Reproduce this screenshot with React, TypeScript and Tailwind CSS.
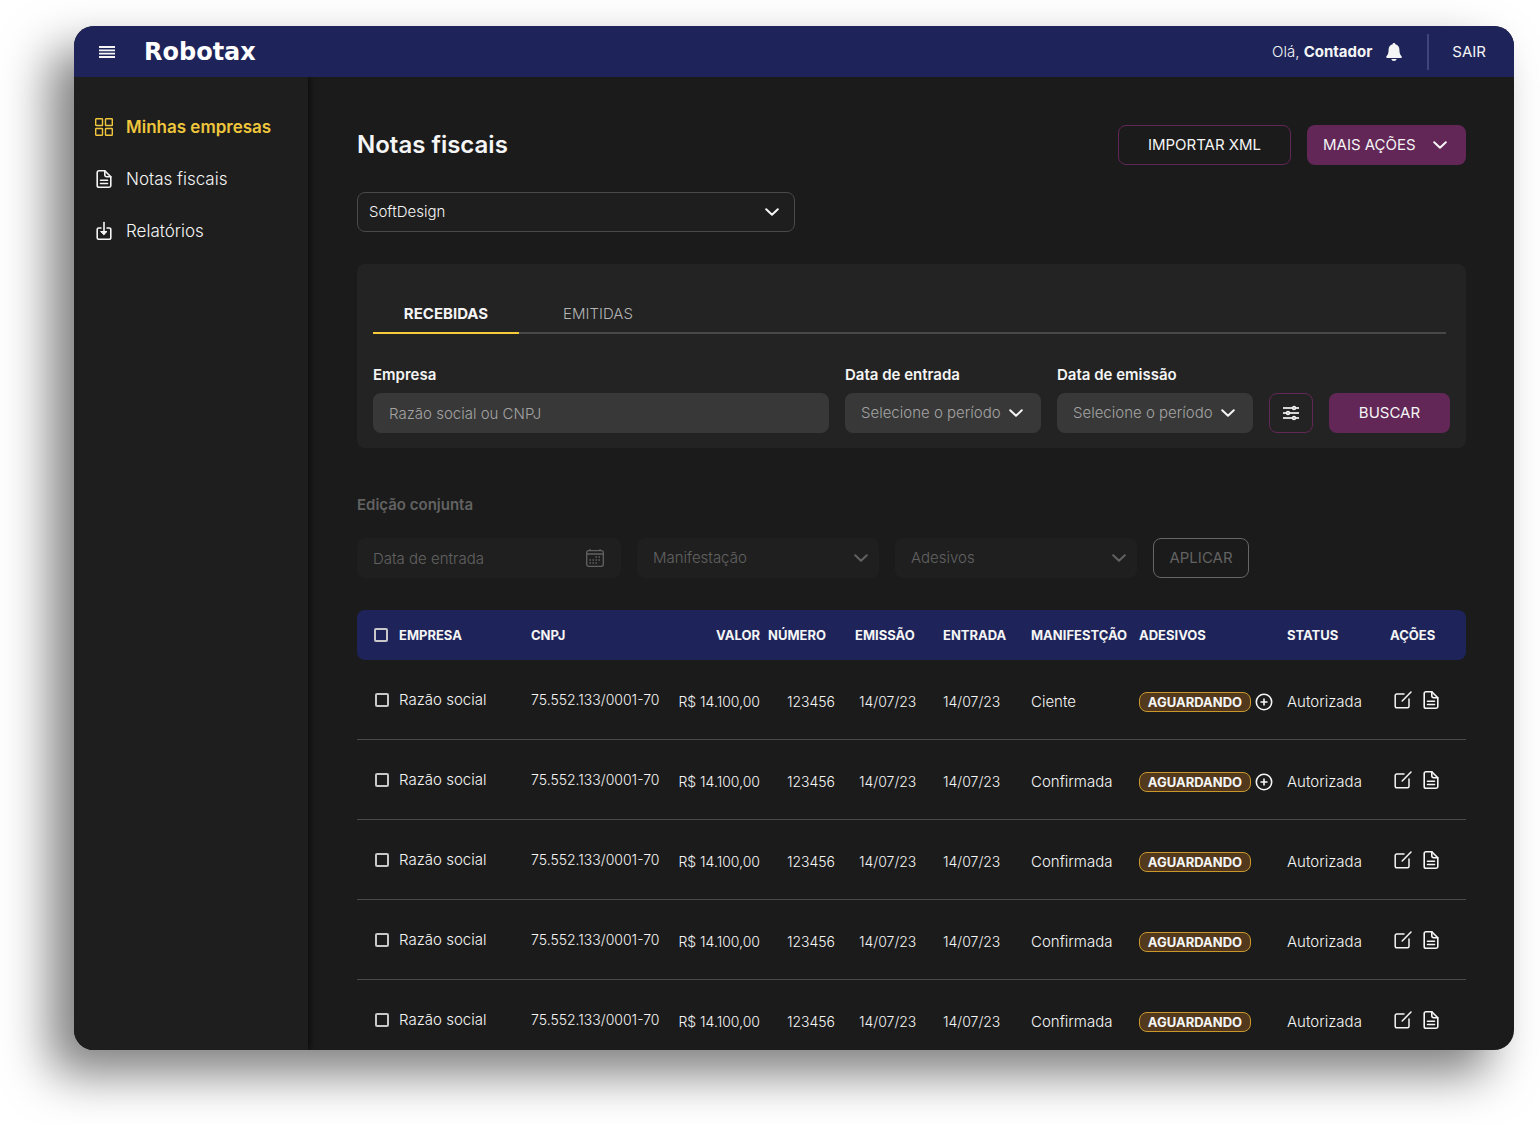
import { useState } from "react";
import type { ReactNode } from "react";

type Invoice = {
  id: number;
  company: string;
  cnpj: string;
  value: string;
  number: string;
  issued: string;
  entered: string;
  manifest: string;
  sticker: string;
  canAddSticker: boolean;
  status: string;
};

const BASE_INVOICE = {
  company: "Razão social",
  cnpj: "75.552.133/0001-70",
  value: "R$ 14.100,00",
  number: "123456",
  issued: "14/07/23",
  entered: "14/07/23",
  sticker: "AGUARDANDO",
  status: "Autorizada",
};

const INVOICES: Invoice[] = [
  { ...BASE_INVOICE, id: 1, manifest: "Ciente", canAddSticker: true },
  { ...BASE_INVOICE, id: 2, manifest: "Confirmada", canAddSticker: true },
  { ...BASE_INVOICE, id: 3, manifest: "Confirmada", canAddSticker: false },
  { ...BASE_INVOICE, id: 4, manifest: "Confirmada", canAddSticker: false },
  { ...BASE_INVOICE, id: 5, manifest: "Confirmada", canAddSticker: false },
];

const TABS = [
  { value: "received", label: "RECEBIDAS" },
  { value: "issued", label: "EMITIDAS" },
] as const;

type Tab = (typeof TABS)[number]["value"];

function MenuIcon() {
  return (
    <svg width="16" height="12" viewBox="0 0 16 12" stroke="currentColor" strokeWidth="1.8" aria-hidden>
      <path d="M0 1h16M0 4.300h16M0 7.700h16M0 11h16" />
    </svg>
  );
}

function BellIcon() {
  return (
    <svg width="16" height="18" viewBox="0 0 16 18" fill="currentColor" aria-hidden>
      <path d="M8 0c.8 0 1.3.5 1.4 1.2C12 1.8 13.400 4 13.400 6.600c0 3.600.7 5.200 2.100 6.600.8.800.4 1.800-.7 1.800H1.200C.1 15-.3 14 .5 13.200c1.400-1.400 2.100-3 2.100-6.600C2.600 4 4 1.800 6.600 1.200 6.700.5 7.200 0 8 0z" />
      <path d="M5.300 16h5.400c-.3 1.200-1.300 2-2.700 2s-2.400-.8-2.700-2z" />
    </svg>
  );
}

function GridIcon() {
  return (
    <svg width="18" height="18" viewBox="0 0 18 18" fill="none" stroke="currentColor" strokeWidth="1.400" aria-hidden>
      <rect x=".7" y=".7" width="6.800" height="6.800" rx=".6" />
      <rect x="10.500" y=".7" width="6.800" height="6.800" rx=".6" />
      <rect x=".7" y="10.500" width="6.800" height="6.800" rx=".6" />
      <rect x="10.500" y="10.500" width="6.800" height="6.800" rx=".6" />
    </svg>
  );
}

function DocIcon() {
  return (
    <svg
      width="18"
      height="20"
      viewBox="0 0 18 20"
      fill="none"
      stroke="currentColor"
      strokeWidth="1.600"
      strokeLinecap="round"
      strokeLinejoin="round"
      aria-hidden
    >
      <path d="M9.800 1.700H4A1.800 1.800 0 0 0 2.200 3.500v13A1.800 1.800 0 0 0 4 18.300h10a1.800 1.800 0 0 0 1.800-1.800V7.700z" />
      <path d="M9.800 1.700v4.200a1.800 1.800 0 0 0 1.800 1.800h4.200M5.500 11.200h7M5.500 14.500h7" />
    </svg>
  );
}

function DownloadIcon() {
  return (
    <svg
      width="18"
      height="20"
      viewBox="0 0 18 20"
      fill="none"
      stroke="currentColor"
      strokeWidth="1.600"
      strokeLinecap="round"
      strokeLinejoin="round"
      aria-hidden
    >
      <path d="M6 7H3.700A1.500 1.500 0 0 0 2.200 8.500v8.300a1.500 1.500 0 0 0 1.500 1.500h10.600a1.500 1.500 0 0 0 1.500-1.500V8.500A1.500 1.500 0 0 0 14.300 7H12" />
      <path d="M9 1.500V13" />
      <path d="M6 10.500h6l-3 3z" fill="currentColor" strokeWidth="1" />
    </svg>
  );
}

function ChevronIcon() {
  return (
    <svg
      width="14"
      height="8"
      viewBox="0 0 14 8"
      fill="none"
      stroke="currentColor"
      strokeWidth="2"
      strokeLinecap="round"
      strokeLinejoin="round"
      aria-hidden
    >
      <path d="M1.200 1.200 7 6.800l5.800-5.600" />
    </svg>
  );
}

function SlidersIcon() {
  return (
    <svg width="16" height="16" viewBox="0 0 16 16" stroke="#d4d4d4" strokeWidth="2" aria-hidden>
      <path d="M0 3h16M0 8h16M0 13h16" />
      <g fill="#8a8a8a" stroke="#f5f5f5" strokeWidth="1.400">
        <circle cx="11" cy="3" r="1.500" />
        <circle cx="5" cy="8" r="1.500" />
        <circle cx="11" cy="13" r="1.500" />
      </g>
    </svg>
  );
}

function CalendarIcon() {
  return (
    <svg width="18" height="18" viewBox="0 0 18 18" fill="none" stroke="currentColor" strokeWidth="1.300" aria-hidden>
      <rect x=".7" y="1.700" width="16.600" height="15.600" rx="2" />
      <path d="M.7 5h16.600M4 0v2M14 0v2" />
      <path d="M9.500 8h6M3.500 11h12M3.500 14h8.500" strokeWidth="1.500" strokeDasharray="1.500 1.500" />
    </svg>
  );
}

function EditIcon() {
  return (
    <svg
      width="18"
      height="18"
      viewBox="0 0 18 18"
      fill="none"
      stroke="currentColor"
      strokeWidth="1.500"
      strokeLinecap="round"
      strokeLinejoin="round"
      aria-hidden
    >
      <path d="M10 3H2.700A1.500 1.500 0 0 0 1.200 4.500v10.800a1.500 1.500 0 0 0 1.500 1.500h10.800a1.500 1.500 0 0 0 1.500-1.500V8" />
      <path d="M8.200 10 17 1" />
    </svg>
  );
}

function PlusIcon() {
  return (
    <svg width="18" height="18" viewBox="0 0 18 18" fill="none" stroke="currentColor" strokeWidth="1.600" aria-hidden>
      <circle cx="9" cy="9" r="7.700" />
      <path d="M9 5.500v7M5.500 9h7" />
    </svg>
  );
}

const NAV_ITEMS: { label: string; icon: ReactNode; active: boolean }[] = [
  { label: "Minhas empresas", icon: <GridIcon />, active: true },
  { label: "Notas fiscais", icon: <DocIcon />, active: false },
  { label: "Relatórios", icon: <DownloadIcon />, active: false },
];

function SelectBox({
  id,
  label,
  option,
  className,
  chevronClassName,
  disabled,
}: {
  id: string;
  label?: string;
  option: string;
  className: string;
  chevronClassName: string;
  disabled?: boolean;
}) {
  return (
    <div className="relative">
      <select
        id={id}
        aria-label={label}
        disabled={disabled}
        className={`h-10 w-full appearance-none rounded-lg pr-8 ${className}`}
      >
        <option>{option}</option>
      </select>
      <span className={`pointer-events-none absolute inset-y-0 flex items-center ${chevronClassName}`}>
        <ChevronIcon />
      </span>
    </div>
  );
}

function Checkbox({ label }: { label: string }) {
  return (
    <input
      type="checkbox"
      aria-label={label}
      className="block size-[14px] appearance-none rounded-xs border-2 border-[#c8c8c8] checked:bg-[#f5cb3b]"
    />
  );
}

function TopBar() {
  return (
    <header className="z-20 flex h-[51px] shrink-0 items-center bg-[#1e245a] pr-7 pl-[25px]">
      <button type="button" aria-label="Menu">
        <MenuIcon />
      </button>
      <a href="#" className="ml-[29px] font-['DejaVu_Sans',sans-serif] text-2xl font-bold text-white">
        Robotax
      </a>
      <div className="ml-auto flex items-center">
        <span className="font-light">
          Olá, <strong className="font-bold">Contador</strong>
        </span>
        <button type="button" aria-label="Notificações" className="ml-[14px]">
          <BellIcon />
        </button>
        <span className="ml-[25px] h-9 w-0.5 bg-[#40467a]" />
        <a href="#" className="ml-[23px]">
          SAIR
        </a>
      </div>
    </header>
  );
}

function Sidebar() {
  return (
    <nav className="z-10 w-[234px] shrink-0 bg-[#1e1e1e] pt-6 pl-5 shadow-[2px_0_6px_rgba(0,0,0,0.6)]">
      {NAV_ITEMS.map((item) => (
        <a
          key={item.label}
          href="#"
          className={`flex h-[52px] items-center gap-3 text-[17px] ${
            item.active ? "font-semibold text-[#efc63c]" : "font-light"
          }`}
        >
          <span className="flex w-5 justify-center">{item.icon}</span>
          {item.label}
        </a>
      ))}
    </nav>
  );
}

function FilterCard() {
  const [tab, setTab] = useState<Tab>("received");

  return (
    <section className="mt-8 rounded-lg bg-[#232323] px-4 pt-8 pb-[15px]">
      <div role="tablist" className="mr-1 flex gap-1.5 border-b-2 border-[#484848]">
        {TABS.map((t) => (
          <button
            key={t.value}
            type="button"
            role="tab"
            aria-selected={tab === t.value}
            onClick={() => setTab(t.value)}
            className={`-mb-0.5 h-[38px] w-[146px] border-b-2 ${
              tab === t.value
                ? "border-[#f5cb3b] font-bold"
                : "border-transparent font-light text-[#b4b4b4]"
            }`}
          >
            {t.label}
          </button>
        ))}
      </div>
      <form className="mt-[31px] flex items-end gap-4" onSubmit={(e) => e.preventDefault()}>
        <div className="flex-1">
          <label htmlFor="company" className="mb-2 block font-semibold">
            Empresa
          </label>
          <input
            id="company"
            type="text"
            placeholder="Razão social ou CNPJ"
            className="block h-10 w-full rounded-lg bg-[#383838] px-4 font-light placeholder:text-[#a3a3a3]"
          />
        </div>
        <div className="w-[196px]">
          <label htmlFor="entry-date" className="mb-2 block font-semibold">
            Data de entrada
          </label>
          <SelectBox
            id="entry-date"
            option="Selecione o período"
            className="bg-[#383838] pl-4 font-light text-[#a3a3a3]"
            chevronClassName="right-[18px]"
          />
        </div>
        <div className="w-[196px]">
          <label htmlFor="issue-date" className="mb-2 block font-semibold">
            Data de emissão
          </label>
          <SelectBox
            id="issue-date"
            option="Selecione o período"
            className="bg-[#383838] pl-4 font-light text-[#a3a3a3]"
            chevronClassName="right-[18px]"
          />
        </div>
        <button
          type="button"
          aria-label="Mais filtros"
          className="flex h-10 w-11 items-center justify-center rounded-lg border border-[#622757]"
        >
          <SlidersIcon />
        </button>
        <button type="submit" className="h-10 w-[121px] rounded-lg bg-[#622757]">
          BUSCAR
        </button>
      </form>
    </section>
  );
}

function BulkEdit() {
  return (
    <section className="mt-[47px] text-[#626262]">
      <h2 className="font-semibold">Edição conjunta</h2>
      <div className="mt-[23px] flex gap-4">
        <div className="relative w-[264px]">
          <input
            type="text"
            disabled
            aria-label="Data de entrada"
            placeholder="Data de entrada"
            className="block h-10 w-full rounded-lg bg-[#1f1f1f] px-4 font-light placeholder:text-[#626262]"
          />
          <span className="pointer-events-none absolute inset-y-0 right-[17px] flex items-center">
            <CalendarIcon />
          </span>
        </div>
        <div className="w-[242px]">
          <SelectBox
            id="bulk-manifest"
            label="Manifestação"
            option="Manifestação"
            disabled
            className="bg-[#1f1f1f] pl-4 font-light opacity-100"
            chevronClassName="right-[11px]"
          />
        </div>
        <div className="w-[242px]">
          <SelectBox
            id="bulk-stickers"
            label="Adesivos"
            option="Adesivos"
            disabled
            className="bg-[#1f1f1f] pl-4 font-light opacity-100"
            chevronClassName="right-[11px]"
          />
        </div>
        <button type="button" disabled className="h-10 w-24 rounded-lg border border-[#666666]">
          APLICAR
        </button>
      </div>
    </section>
  );
}

function InvoiceTable() {
  return (
    <table className="mt-8 w-full table-fixed border-separate border-spacing-0 text-left font-light">
      <colgroup>
        <col className="w-[42px]" />
        <col className="w-[132px]" />
        <col className="w-[136px]" />
        <col className="w-[93px]" />
        <col className="w-[95px]" />
        <col className="w-[88px]" />
        <col className="w-[88px]" />
        <col className="w-[108px]" />
        <col className="w-[148px]" />
        <col className="w-[103px]" />
        <col className="w-[76px]" />
      </colgroup>
      <thead className="text-[13px]">
        <tr className="h-[50px] *:bg-[#1e245a] *:font-bold *:whitespace-nowrap">
          <th className="rounded-l-lg pl-[17px]">
            <Checkbox label="Selecionar todas" />
          </th>
          <th>EMPRESA</th>
          <th>CNPJ</th>
          <th className="text-right">VALOR</th>
          <th className="pl-2">NÚMERO</th>
          <th>EMISSÃO</th>
          <th>ENTRADA</th>
          <th>MANIFESTÇÃO</th>
          <th>ADESIVOS</th>
          <th>STATUS</th>
          <th className="rounded-r-lg">AÇÕES</th>
        </tr>
      </thead>
      <tbody>
        {INVOICES.map((inv) => (
          <tr key={inv.id} className="h-20 *:border-b *:border-[#4a4a4a] *:whitespace-nowrap">
            <td className="pl-[18px]">
              <Checkbox label={`Selecionar nota ${inv.number}`} />
            </td>
            <td>{inv.company}</td>
            <td className="text-sm">{inv.cnpj}</td>
            <td className="pt-1 text-right text-sm">{inv.value}</td>
            <td className="pt-1 pr-5 text-right text-sm">{inv.number}</td>
            <td className="pt-1 pl-1 text-sm">{inv.issued}</td>
            <td className="pt-1 text-sm">{inv.entered}</td>
            <td className="pt-1">{inv.manifest}</td>
            <td className="pt-1">
              <div className="flex items-center gap-1">
                <span className="flex h-5 w-28 items-center justify-center rounded-lg border border-[#c9982c] bg-[#52391d] text-[13px] font-bold">
                  {inv.sticker}
                </span>
                {inv.canAddSticker && (
                  <button type="button" aria-label="Adicionar adesivo">
                    <PlusIcon />
                  </button>
                )}
              </div>
            </td>
            <td className="pt-1">{inv.status}</td>
            <td className="pl-1">
              <div className="flex items-center gap-[10px]">
                <button type="button" aria-label="Editar">
                  <EditIcon />
                </button>
                <button type="button" aria-label="Ver nota">
                  <DocIcon />
                </button>
              </div>
            </td>
          </tr>
        ))}
      </tbody>
    </table>
  );
}

export default function App() {
  return (
    <div className="h-screen bg-white pt-[26px] pr-[26px] pb-[74px] pl-[74px] font-['Inter',sans-serif] text-[15px]/5 text-[#f5f5f5]">
      <div className="flex h-full flex-col overflow-hidden rounded-[20px] bg-[#1b1b1b] shadow-[-24px_24px_48px_rgba(0,0,0,0.5)]">
        <TopBar />
        <div className="flex min-h-0 flex-1">
          <Sidebar />
          <main className="min-w-0 flex-1 overflow-hidden pt-12 pr-12 pl-[49px]">
            <div className="flex items-center gap-4">
              <h1 className="mr-auto text-2xl font-semibold">Notas fiscais</h1>
              <button type="button" className="h-10 w-[173px] rounded-lg border border-[#622757]">
                IMPORTAR XML
              </button>
              <button
                type="button"
                className="flex h-10 w-[159px] items-center justify-between rounded-lg bg-[#622757] pr-[19px] pl-4"
              >
                MAIS AÇÕES
                <ChevronIcon />
              </button>
            </div>
            <div className="mt-[27px] w-[438px]">
              <SelectBox
                id="client"
                label="Cliente"
                option="SoftDesign"
                className="border border-[#4a4a4a] bg-[#1e1e1e] pl-[11px] font-light"
                chevronClassName="right-4"
              />
            </div>
            <FilterCard />
            <BulkEdit />
            <InvoiceTable />
          </main>
        </div>
      </div>
    </div>
  );
}
